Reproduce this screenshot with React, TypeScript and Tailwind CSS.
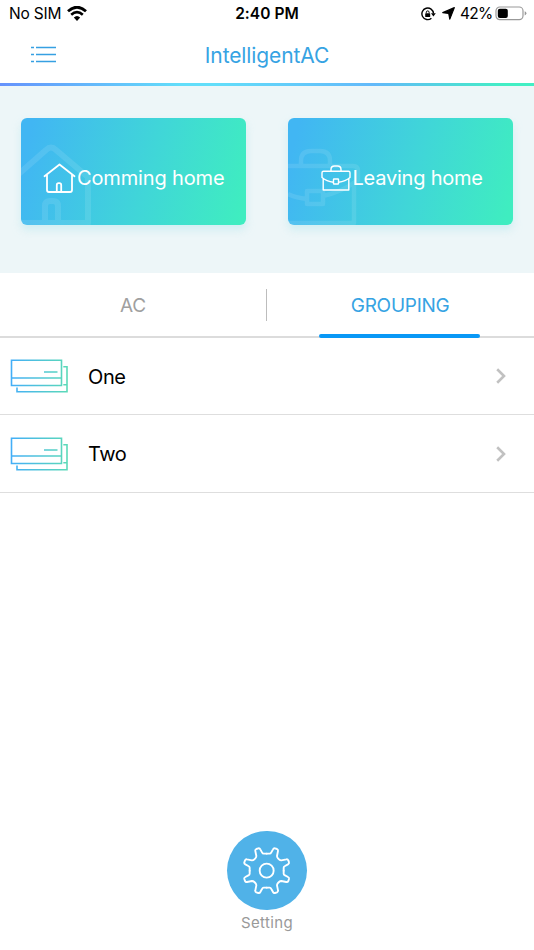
import type { ReactNode } from 'react';

function StatusBar() {
  return (
    <div className="flex h-[27px] items-center text-[16px] leading-[27px] text-black">
      <div className="flex flex-1 items-center pl-[9px]">
        <span className="w-[58px] whitespace-nowrap text-[15.5px] tracking-[-0.2px]">No SIM</span>
        <svg width="20" height="16" viewBox="0 0 20 16" fill="none" stroke="#000">
          <path d="M1 5.3Q10-2.9 19 5.3" strokeWidth="2.8" />
          <path d="M4.2 8.8Q10 3.6 15.8 8.8" strokeWidth="2.6" />
          <path d="M6.8 11.6Q10 8.6 13.2 11.6L10 15Z" fill="#000" stroke="none" />
        </svg>
      </div>
      <span className="mr-[2px] whitespace-nowrap text-[15.5px] font-semibold tracking-[0.05px]">2:40 PM</span>
      <div className="flex flex-1 items-center justify-end pr-[7px]">
        <svg width="15" height="14" viewBox="0 0 15 14" className="mr-[6px]" fill="none" stroke="#000">
          <path d="M12.5 6.5A5.8 5.8 0 1 0 10.4 11.3" strokeWidth="1.4" />
          <path d="M10 6.3h4.8l-2.4 3.2Z" fill="#000" stroke="none" />
          <rect x="4.2" y="6.2" width="5" height="3.9" rx=".6" fill="#000" stroke="none" />
          <path d="M5.3 6.2V5.3a1.4 1.4 0 0 1 2.8 0v.9" strokeWidth="1" />
        </svg>
        <svg width="13" height="13" viewBox="0 0 12 12" className="mr-[5px]">
          <path d="M11.4.6 7.2 11.2 6.2 6 .7 5.2Z" fill="#000" stroke="#000" strokeWidth="1.1" strokeLinejoin="round" />
        </svg>
        <span className="w-[35px] whitespace-nowrap text-[15.5px] tracking-[-0.7px]">42%</span>
        <svg width="32" height="15" viewBox="0 0 32 15">
          <rect x="1" y="1" width="27" height="12.6" rx="3.8" fill="none" stroke="#999" strokeWidth="1.2" />
          <rect x="2.8" y="2.7" width="10" height="9.2" rx="2" />
          <path d="M29.7 5.2q1.7.6 1.7 2.1t-1.7 2.1Z" fill="#999" />
        </svg>
      </div>
    </div>
  );
}

function HousePaths() {
  return (
    <>
      <path d="M1.5 13.2 16.5 1.5 31.5 13.2M4 11.5V27q0 2 2 2h21q2 0 2-2V11.5" />
      <path d="M13.8 29v-7q0-1.8 1.8-1.8h.8q1.8 0 1.8 1.8v7" />
    </>
  );
}

function CasePaths() {
  return (
    <>
      <path d="M10 6V4.5Q10 1 13.5 1h3Q20 1 20 4.5V6" />
      <path d="M2.2 13.5V25h25.6V13.5M12.5 17.2Q5.5 16.3 1 12.5V7.7Q1 6.2 2.5 6.2h25Q29 6.2 29 7.7v4.8q-4.5 3.8-11.5 4.7" />
      <rect x="12.5" y="14" width="5" height="5" rx=".6" />
    </>
  );
}

function SceneCard({ label, icon, ghost }: { label: ReactNode; icon: ReactNode; ghost: ReactNode }) {
  return (
    <div className="relative flex h-[107px] w-[225px] items-center justify-start rounded-[6px] bg-[linear-gradient(105deg,#41b6f3_5%,#40d6d8_56%,#3fedc0_97%)] pt-[13px] shadow-[0_5px_9px_#bde9ee99]">
      {ghost}
      {icon}
      {label}
    </div>
  );
}

function UnitIcon({ id }: { id: string }) {
  return (
    <svg width="58" height="36" viewBox="10 358 58 36" fill="none" stroke={`url(#${id})`} strokeWidth="1.6">
      <defs>
        <linearGradient id={id} gradientUnits="userSpaceOnUse" x1="11" y1="0" x2="68" y2="0">
          <stop offset="0" stopColor="#43aef8" />
          <stop offset="1" stopColor="#5cdab7" />
        </linearGradient>
      </defs>
      <path d="M11.5 360.3H61.5V385.5H11.5ZM11.5 378.01L61.5 378M44 372.01L57.5 372M63.3 366.8H67V391.8H17V387.5M63.3 384.8H67" />
    </svg>
  );
}

function GroupRow({ name, id }: { name: string; id: string }) {
  return (
    <div className="flex h-[77.3px] items-center border-b border-[#dedede] pt-[0.4px] pr-[27px] pl-[10px]">
      <UnitIcon id={id} />
      <span className="ml-[20px] flex-1 pt-[0.4px] text-[20px] tracking-[-0.4px] text-black">{name}</span>
      <svg width="12" height="16" viewBox="0 0 12 16" fill="none" stroke="#c1c1c1" strokeWidth="2.6">
        <path d="M2.2 1.3 9 8 2.2 14.7" />
      </svg>
    </div>
  );
}

export default function App() {
  return (
    <div className="flex h-[950px] w-[534px] flex-col overflow-hidden bg-white font-['Inter','Liberation_Sans',sans-serif]">
      <StatusBar />
      <header className="grid h-[56px] grid-cols-[1fr_auto_1fr] items-center">
        <svg width="26" height="18" viewBox="0 0 26 18" className="ml-[31px]" stroke="#36a0e2" strokeWidth="1.7">
          <path d="M0 1.5H3M5 1.5H25M0 8.5H3M5 8.5H25M0 15.5H3M5 15.5H25" />
        </svg>
        <h1 className="whitespace-nowrap pt-[1px] text-[21px] font-normal tracking-[-0.1px] text-[#36a3e3]">IntelligentAC</h1>
      </header>
      <div className="h-[3px] bg-[linear-gradient(90deg,#6592fc,#62defa_34%,#62defa_40%,#63b9fa_70%,#42efc4_95%)]" />
      <section className="flex h-[187px] justify-between bg-[#edf6f8] pt-[32px] pr-[21px] pl-[21px]">
        <SceneCard
          ghost={
            <svg className="absolute inset-0 rounded-[6px]" width="225" height="107" viewBox="0 0 225 107" fill="none" stroke="#fff" strokeOpacity=".1" strokeWidth="6" strokeLinejoin="round">
              <path d="M-8 61 25 32Q30 27 35 32L68 60M67 55V105H-5M24 107V88q0-5 5-5h3q5 0 5 5v19" />
            </svg>
          }
          icon={
            <svg width="33" height="31" viewBox="0 0 33 31" className="ml-[22px] shrink-0" fill="none" stroke="#fff" strokeWidth="1.8" strokeLinecap="round" strokeLinejoin="round">
              <HousePaths />
            </svg>
          }
          label={<span className="ml-[1px] whitespace-nowrap text-[20px] font-normal tracking-[-0.14px] text-white">Comming home</span>}
        />
        <SceneCard
          ghost={
            <svg className="absolute inset-0 rounded-[6px]" width="225" height="107" viewBox="0 0 225 107" fill="none" stroke="#fff" strokeOpacity=".1" strokeWidth="4.5" strokeLinejoin="round">
              <path d="M13 48V43Q13 33 23 33h9q10 0 10 10v5M-5 48H65q5 0 5 5v9Q54 74 35 78M0 76q8 4 19 5M66 67v38H0M19 73h16v13H19Z" />
            </svg>
          }
          icon={
            <svg width="30" height="26" viewBox="0 0 30 26" className="ml-[32.5px] shrink-0" fill="none" stroke="#fff" strokeWidth="1.4" strokeLinejoin="round">
              <CasePaths />
            </svg>
          }
          label={<span className="ml-[2px] whitespace-nowrap text-[20px] font-normal tracking-[-0.22px] text-white">Leaving home</span>}
        />
      </section>
      <nav className="flex h-[65px] border-b-2 border-[#dcdcdc] text-[19px]">
        <div className="flex flex-1 items-center justify-center pt-[3.5px] font-normal tracking-[-0.4px] text-[#a0a0a0]">AC</div>
        <div className="mt-[16px] h-[32px] w-[1.5px] bg-[#bdbdbd]" />
        <div className="relative flex flex-1 items-center justify-center pt-[3.5px] pr-[1px] font-normal tracking-[-0.25px] text-[#36a3e3]">
          GROUPING
          <div className="absolute bottom-[-1.5px] left-[52px] h-[4px] w-[160.5px] rounded-[2px] bg-[#0998f6]" />
        </div>
      </nav>
      <main className="flex-1">
        <GroupRow name="One" id="unit-one" />
        <GroupRow name="Two" id="unit-two" />
      </main>
      <footer className="flex h-[119.5px] flex-col items-center">
        <button className="flex size-[79.5px] shrink-0 items-center justify-center rounded-full bg-[#50b2e8]">
          <svg width="53.33" height="53.33" viewBox="-80 -80 160 160" fill="none" stroke="#fff" strokeWidth="5.6" strokeLinejoin="round" strokeLinecap="round">
            <path id="cog" d="M0-51H9Q12-51 14-55L19-64Q21-68 25-67L31-65Q35-63 34-59L31-44Q31-40 34-37L37-34Q40-31 44-31L59-34Q63-35 65-31L67-25Q68-21 64-19L55-14Q51-12 51-9V0" />
            <use href="#cog" transform="rotate(90)" />
            <use href="#cog" transform="rotate(180)" />
            <use href="#cog" transform="rotate(270)" />
            <circle r="21" />
          </svg>
        </button>
        <span className="mt-[1px] text-[15px] leading-[24px] tracking-[0.35px] text-[#999]">Setting</span>
      </footer>
    </div>
  );
}
